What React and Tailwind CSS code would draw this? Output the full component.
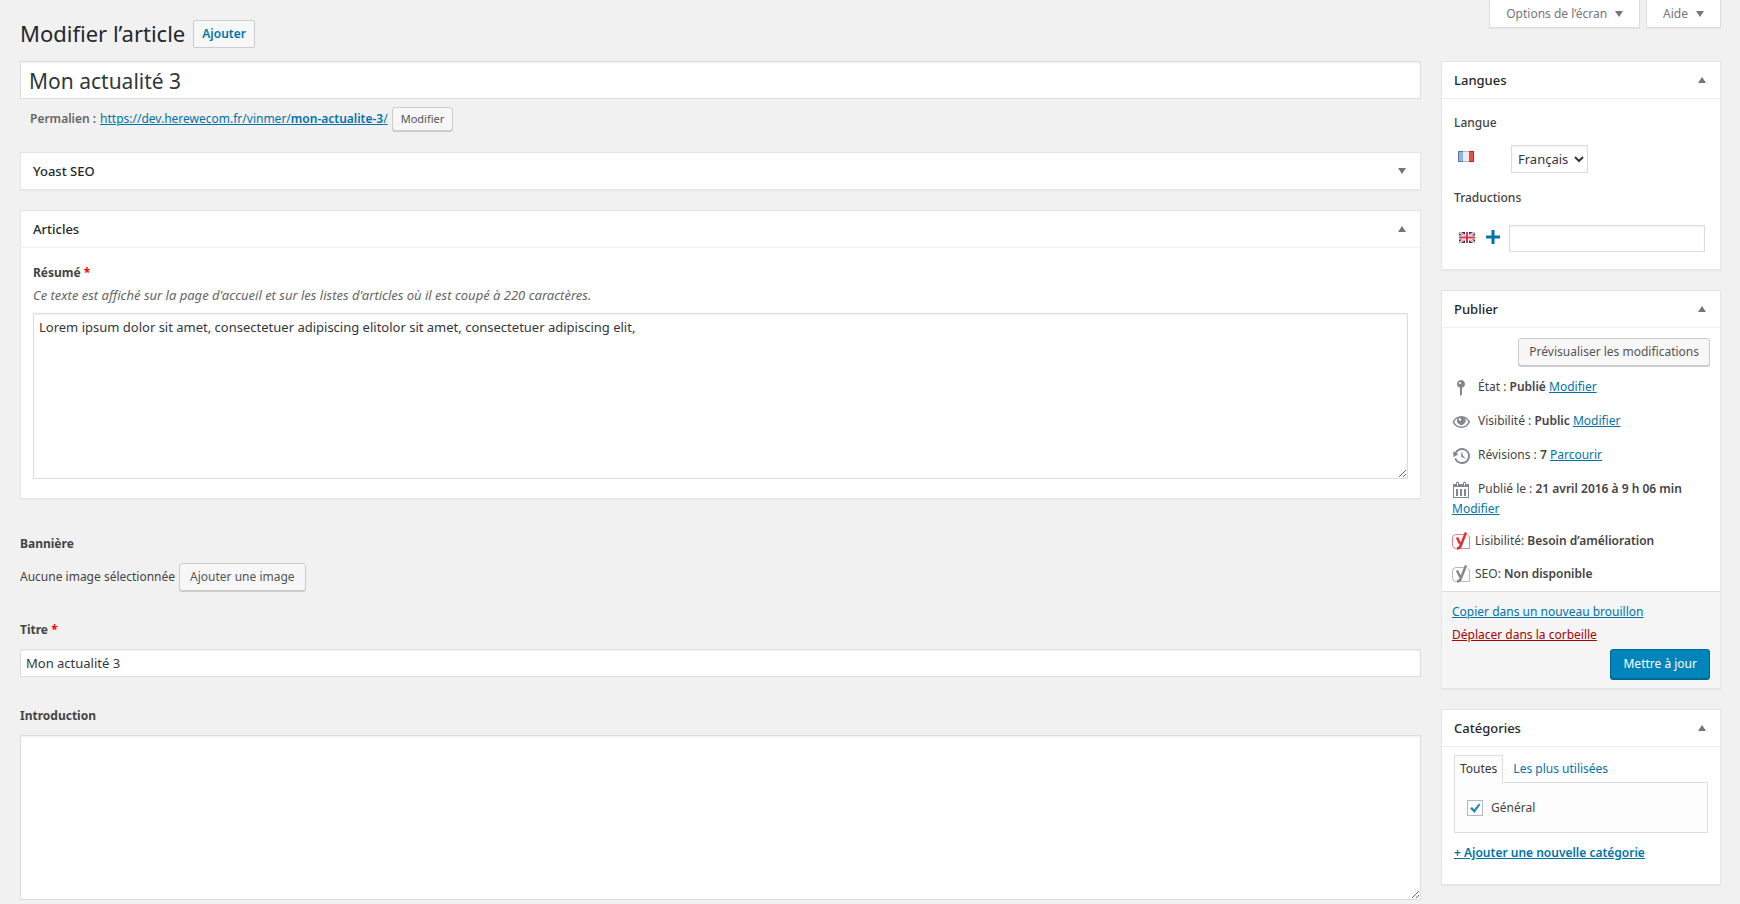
import React, { useState } from "react";

const LINK = "text-[#0073aa] underline";
const FIELD = "border border-[#ddd] bg-white text-[#32373c] shadow-[inset_0_1px_2px_rgba(0,0,0,0.07)]";
const BUTTON = "rounded-[3px] border border-[#ccc] bg-[#f7f7f7] text-[#555] shadow-[0_1px_0_#ccc]";

const Triangle = ({ up }) => (
  <svg width="8" height="6" viewBox="0 0 8 6" className="shrink-0 fill-[#72777c]" aria-hidden="true">
    <path d={up ? "M4 0l4 6H0z" : "M4 6l4-6H0z"} />
  </svg>
);

const Dashicon = ({ d }) => (
  <svg width="20" height="20" viewBox="0 0 20 20" className="shrink-0 fill-[#82878c]" aria-hidden="true">
    <path fillRule="evenodd" d={d} />
  </svg>
);

const ICONS = {
  pin: "M13 6c0 1.86-1.28 3.41-3 3.86V16c0 1-2 2-2 2V9.86c-1.72-.45-3-2-3-3.86 0-2.21 1.79-4 4-4s4 1.79 4 4zM7 5c0 .55.45 1 1 1s1-.45 1-1-.45-1-1-1-1 .45-1 1z",
  eye: "M9.300 4C5.500 4 2.300 6.200.4 10c1.900 3.800 5.100 6 8.900 6s7-2.200 8.900-6c-1.900-3.800-5.100-6-8.900-6zM9.300 14.600c-3 0-5.500-1.600-7.100-4.600 1-1.900 2.300-3.200 3.900-3.900A4.200 4.200 0 1 0 12.500 6.100c1.600.7 2.900 2 3.900 3.900-1.600 3-4.100 4.600-7.100 4.600zM8 6.200a1.300 1.300 0 1 0 0 2.600 1.300 1.300 0 0 0 0-2.600z",
  history: "M13.65 2.88c3.93 2.01 5.48 6.84 3.47 10.77s-6.83 5.48-10.77 3.47c-1.87-.96-3.2-2.56-3.86-4.4l1.64-1.03c.45 1.57 1.52 2.95 3.08 3.76 3.01 1.54 6.69.35 8.23-2.66 1.55-3.01.36-6.69-2.65-8.24C9.78 3.01 6.1 4.2 4.56 7.21l1.88.97-4.95 3.08-.39-5.82 1.78.91C4.9 2.4 9.75.89 13.65 2.88zm-4.36 7.83C9.11 10.53 9 10.28 9 10c0-.07.03-.12.04-.19h-.01L10 5l.97 4.81L14 13l-4.5-2.12.02-.02c-.08-.04-.16-.09-.23-.15z",
  calendar: "M14 4h3v14H1V4h3V3a1.500 1.500 0 0 1 3 0v1h4V3a1.500 1.500 0 0 1 3 0zM2 7v10h14V7zM4 9h2v7H4zM8 9h2v7H8zM12 9h2v7h-2zM5 3v2.500h1V3zM12 3v2.500h1V3z",
};

const YoastIcon = ({ className }) => (
  <svg width="18" height="18" viewBox="0 0 18 18" fill="none" className={className} stroke="currentColor" aria-hidden="true">
    <path d="M12.500 2.500H4A3.500 3.500 0 0 0 .5 6v7A3.500 3.500 0 0 0 4 16.500h13.500V6a3.500 3.500 0 0 0-2-3" opacity=".6" />
    <path d="M5 5.500l3.200 6.500M14 .5L9 13c-.8 2.300-1.800 3.500-4 3.500" strokeWidth="2.500" />
  </svg>
);

const FrenchFlag = () => (
  <svg width="16" height="11" viewBox="0 0 16 11" className="shrink-0" role="img" aria-label="Français">
    <path fill="#8fb2ea" d="M0 0h6v11H0z" />
    <path fill="#ececec" d="M5 0h6v11H5z" />
    <path fill="#ee4b45" d="M11 0h5v11h-5z" />
    <path fill="none" stroke="#3c4f86" strokeOpacity=".6" d="M5 .5H.5v10H5" />
    <path fill="none" stroke="#a11c1c" strokeOpacity=".7" d="M11 .5h4.500v10H11" />
    <path fill="none" stroke="#999" strokeOpacity=".6" d="M5 .5h6M5 10.500h6" />
  </svg>
);

const BritishFlag = () => (
  <svg width="16" height="11" viewBox="0 0 16 11" className="shrink-0" role="img" aria-label="English">
    <path fill="#31316f" d="M0 0h16v11H0z" />
    <path stroke="#fff" strokeWidth="2.200" d="M0 0l16 11M16 0L0 11" />
    <path stroke="#d8405a" strokeWidth=".7" d="M0 0l16 11M16 0L0 11" />
    <path fill="#fff" d="M6 0h4v11H6zM0 3.500h16v4H0z" />
    <path fill="#e0354a" d="M7 0h2v11H7zM0 4.500h16v2H0z" />
  </svg>
);

const Panel = ({ title, open = true, children }) => (
  <section className="border border-[#e5e5e5] bg-white shadow-[0_1px_1px_rgba(0,0,0,0.04)]">
    <div className={open ? "flex h-[37px] items-center border-b border-[#eee] pr-[14px] pl-3" : "flex h-[36px] items-center pr-[14px] pl-3"}>
      <h2 className="flex-1 text-[13px] font-medium text-[#23282d]">{title}</h2>
      <button type="button" aria-label={`Ouvrir ou fermer ${title}`}>
        <Triangle up={open} />
      </button>
    </div>
    {open && children}
  </section>
);

const PublishRow = ({ icon, label, value, action }) => (
  <div>
    <span className="-my-1 inline-block pr-[6px] align-middle">
      <Dashicon d={ICONS[icon]} />
    </span>
    {label} <b className="font-semibold">{value}</b>{" "}
    <a href="#" className={LINK}>{action}</a>
  </div>
);

const ScoreRow = ({ color, label, value }) => (
  <div className="flex items-center gap-[5px]">
    <YoastIcon className={color} />
    <span>
      {label} <b className="font-semibold">{value}</b>
    </span>
  </div>
);

const App = () => {
  const [title, setTitle] = useState("Mon actualité 3");
  const [heading, setHeading] = useState("Mon actualité 3");
  const [general, setGeneral] = useState(true);

  return (
    <div className="min-h-screen bg-[#f1f1f1] pr-[19px] pl-5 font-['Noto_Sans',sans-serif] text-[12px] leading-[20px] text-[#444]">
      <header className="flex h-[61px] items-start justify-between">
        <div className="flex items-start gap-2 pt-5">
          <h1 className="text-[22px] leading-[26px] text-[#23282d]">Modifier l’article</h1>
          <a href="#" className="rounded-[2px] border border-[#ccc] bg-[#f7f7f7] px-2 py-[3px] font-semibold text-[#0073aa]">
            Ajouter
          </a>
        </div>
        <div className="flex gap-[6px] text-[#72777c]">
          {["Options de l’écran", "Aide"].map((label) => (
            <button key={label} type="button" className="flex h-7 items-center gap-2 border border-t-0 border-[#ddd] bg-white px-4 shadow-[0_1px_1px_rgba(0,0,0,0.04)]">
              {label}
              <Triangle />
            </button>
          ))}
        </div>
      </header>

      <div className="flex items-start gap-5">
        <main className="min-w-0 flex-1">
          <input
            aria-label="Titre de l’article"
            value={title}
            onChange={(e) => setTitle(e.target.value)}
            className={`${FIELD} block h-[38px] w-full px-2 pt-[2px] text-[21px]`}
          />
          <div className="mt-2 flex items-center gap-1 px-[10px]">
            <strong className="font-semibold text-[#666]">Permalien :</strong>
            <a href="#" className={LINK}>
              https://dev.herewecom.fr/vinmer/<span className="font-semibold">mon-actualite-3</span>/
            </a>
            <button type="button" className={`${BUTTON} h-6 px-2 text-[11px]`}>Modifier</button>
          </div>

          <div className="mt-[21px] flex flex-col gap-5">
            <Panel title="Yoast SEO" open={false} />
            <Panel title="Articles">
              <div className="px-3 pt-[15px] pb-[19px]">
                <label htmlFor="resume" className="block font-bold">
                  Résumé <span className="text-[#f00]">*</span>
                </label>
                <p className="mt-[2px] text-[13px] text-[#666] italic">
                  Ce texte est affiché sur la page d'accueil et sur les listes d'articles où il est coupé à 220 caractères.
                </p>
                <textarea
                  id="resume"
                  defaultValue="Lorem ipsum dolor sit amet, consectetuer adipiscing elitolor sit amet, consectetuer adipiscing elit,"
                  className={`${FIELD} mt-2 block h-[166px] w-full px-[5px] py-[3px] text-[13px] leading-[20px]`}
                />
              </div>
            </Panel>
          </div>

          <div className="mt-[35px]">
            <h3 className="font-bold">Bannière</h3>
            <div className="mt-[9px] flex items-center gap-1">
              Aucune image sélectionnée
              <button type="button" className={`${BUTTON} h-7 px-[10px]`}>Ajouter une image</button>
            </div>
          </div>

          <div className="mt-[29px]">
            <label htmlFor="titre" className="block font-bold">
              Titre <span className="text-[#f00]">*</span>
            </label>
            <input
              id="titre"
              value={heading}
              onChange={(e) => setHeading(e.target.value)}
              className={`${FIELD} mt-[9px] block h-7 w-full px-[5px] text-[13px]`}
            />
          </div>

          <div className="mt-[29px]">
            <label htmlFor="introduction" className="block font-bold">Introduction</label>
            <textarea id="introduction" className={`${FIELD} mt-[9px] block h-[165px] w-full px-[5px] py-[3px] text-[13px]`} />
          </div>
        </main>

        <aside className="flex w-[280px] shrink-0 flex-col gap-5">
          <Panel title="Langues">
            <div className="px-3 pt-[14px] pb-[17px]">
              <label htmlFor="langue" className="font-medium">Langue</label>
              <div className="mt-3 flex items-start pl-1">
                <span className="pt-[6px]">
                  <FrenchFlag />
                </span>
                <select id="langue" className={`${FIELD} ml-[37px] h-7 px-[2px] text-[13px]`}>
                  <option>Français</option>
                  <option>English</option>
                </select>
              </div>
              <label htmlFor="traduction" className="mt-[15px] block font-medium">Traductions</label>
              <div className="mt-[17px] flex items-start pr-[3px] pl-[5px]">
                <span className="pt-[7px]">
                  <BritishFlag />
                </span>
                <button type="button" aria-label="Ajouter une traduction" className="mr-[9px] ml-[11px] pt-[5px]">
                  <svg width="14" height="14" viewBox="0 0 14 14" className="fill-[#0073aa]">
                    <path d="M5.500 0h3v5.500H14v3H8.500V14h-3V8.500H0v-3h5.500z" />
                  </svg>
                </button>
                <input id="traduction" className={`${FIELD} h-[27px] w-full min-w-0 px-[5px]`} />
              </div>
            </div>
          </Panel>

          <Panel title="Publier">
            <div className="flex flex-col px-[10px] pt-[10px] pb-[7px]">
              <button type="button" className={`${BUTTON} h-7 self-end px-[10px]`}>Prévisualiser les modifications</button>
              <div className="mt-[11px] flex flex-col gap-[14px]">
                <PublishRow icon="pin" label="État :" value="Publié" action="Modifier" />
                <PublishRow icon="eye" label="Visibilité :" value="Public" action="Modifier" />
                <PublishRow icon="history" label="Révisions :" value="7" action="Parcourir" />
                <PublishRow icon="calendar" label="Publié le :" value="21 avril 2016 à 9 h 06 min" action="Modifier" />
              </div>
              <div className="mt-3 flex flex-col gap-[13px]">
                <ScoreRow color="text-[#dc3232]" label="Lisibilité:" value="Besoin d’amélioration" />
                <ScoreRow color="text-[#888]" label="SEO:" value="Non disponible" />
              </div>
            </div>
            <div className="flex flex-col items-start border-t border-[#ddd] bg-[#f5f5f5] px-[10px] pt-[10px] pb-[9px]">
              <a href="#" className={LINK}>Copier dans un nouveau brouillon</a>
              <a href="#" className="mt-[3px] text-[#a00] underline">Déplacer dans la corbeille</a>
              <button type="button" className="mt-1 h-[30px] self-end rounded-[3px] border border-[#006799] bg-[#0085ba] px-3 text-white shadow-[0_1px_0_#006799]">
                Mettre à jour
              </button>
            </div>
          </Panel>

          <Panel title="Catégories">
            <div className="px-3 pt-2 pb-[21px]">
              <div className="flex">
                <a href="#" className="relative -mb-px border border-b-0 border-[#ddd] bg-[#fdfdfd] px-[5px] pt-[3px] pb-1 text-[#32373c]">Toutes</a>
                <a href="#" className="px-[10px] pt-1 text-[#0073aa]">Les plus utilisées</a>
              </div>
              <div className="border border-[#ddd] bg-[#fdfdfd] px-3 pt-[15px] pb-[14px]">
                <label className="flex items-center gap-2">
                  <span className="grid">
                    <input
                      type="checkbox"
                      checked={general}
                      onChange={(e) => setGeneral(e.target.checked)}
                      className="peer col-start-1 row-start-1 size-4 appearance-none border border-[#b4b9be] bg-white"
                    />
                    <svg viewBox="0 0 16 16" className="pointer-events-none col-start-1 row-start-1 hidden size-4 fill-[#1e8cbe] peer-checked:block">
                      <path d="M3 8.500l2-1.500 2.200 2.200L12 3.500l1.500 1L7.500 13z" />
                    </svg>
                  </span>
                  Général
                </label>
              </div>
              <a href="#" className={`${LINK} mt-[10px] inline-block font-semibold`}>+ Ajouter une nouvelle catégorie</a>
            </div>
          </Panel>
        </aside>
      </div>
    </div>
  );
};

export default App;
